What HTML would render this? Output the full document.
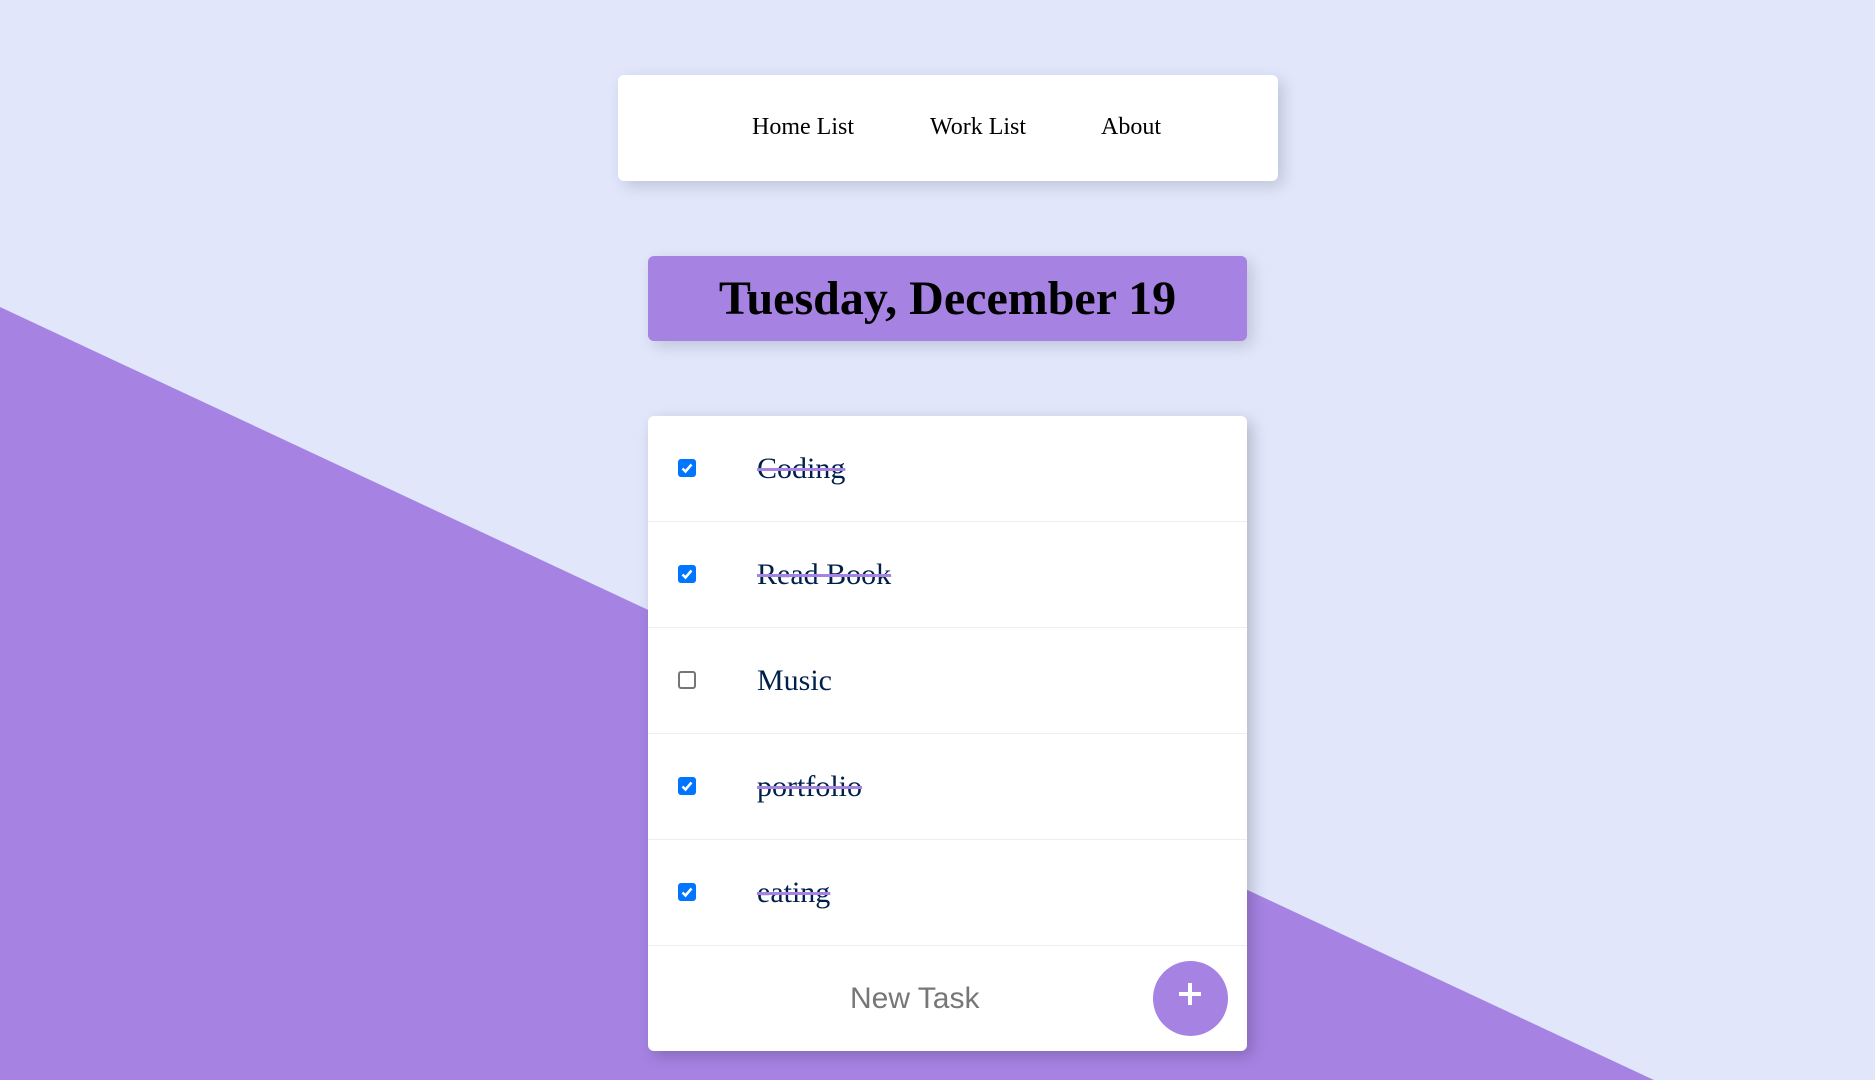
<!DOCTYPE html>
<html><head><meta charset="utf-8"><style>
*{margin:0;padding:0;box-sizing:border-box}
body{width:1875px;height:1080px;overflow:hidden;background:#e1e6fb;position:relative;font-family:"Liberation Serif",serif}
.bg{position:absolute;left:0;top:0}
.nav{position:absolute;left:618px;top:75px;width:660px;height:106px;background:#fff;border-radius:6px;box-shadow:5px 5px 15px rgba(0,0,0,.15)}
.nav span{position:absolute;top:37px;font-size:24px;color:#000;line-height:30px}
.date{position:absolute;left:648px;top:256px;width:599px;height:85px;background:#a683e3;border-radius:6px;box-shadow:5px 5px 15px rgba(0,0,0,.15);text-align:center;font-weight:bold;font-size:48px;line-height:85px;color:#000}
.card{position:absolute;left:648px;top:416px;width:599px;height:635px;background:#fff;border-radius:6px;box-shadow:5px 5px 15px rgba(0,0,0,.2)}
.row{position:absolute;left:0;width:599px;height:106px;border-bottom:1px solid #eee}
.cb{position:absolute;left:30px;top:43px;width:18px;height:18px;border-radius:3px}
.on{background:#0075ff}
.off{border:2px solid #767676;background:#fff}
.t{position:absolute;left:109px;top:33px;font-size:30px;line-height:40px;color:#00204a}
.s{text-decoration:line-through;text-decoration-color:#a683e3;text-decoration-thickness:3px;text-decoration-skip-ink:none}
.nt{position:absolute;left:0;top:529px;width:599px;height:106px}
.ph{position:absolute;left:202px;top:34px;font-family:"Liberation Sans",sans-serif;font-size:30px;color:#777;line-height:40px}
.btn{position:absolute;left:505px;top:545px;width:75px;height:75px;border-radius:50%;background:#a683e3}
.btn:before{content:"";position:absolute;left:26px;top:31px;width:22px;height:4px;background:#fff}
.btn:after{content:"";position:absolute;left:35px;top:22px;width:4px;height:22px;background:#fff}
</style></head><body>
<svg class="bg" width="1875" height="1080"><polygon points="0,307 1654,1080 0,1080" fill="#a683e3"/></svg>
<div class="nav"><span style="left:134px">Home List</span><span style="left:312px">Work List</span><span style="left:483px">About</span></div>
<div class="date">Tuesday, December 19</div>
<div class="card">
<div class="row" style="top:0"><div class="cb on"><svg width="18" height="18"><path d="M4.5 9.5l3 3 6-7" stroke="#fff" stroke-width="2.5" fill="none"/></svg></div><div class="t s">Coding</div></div>
<div class="row" style="top:106px"><div class="cb on"><svg width="18" height="18"><path d="M4.5 9.5l3 3 6-7" stroke="#fff" stroke-width="2.5" fill="none"/></svg></div><div class="t s">Read Book</div></div>
<div class="row" style="top:212px"><div class="cb off"></div><div class="t">Music</div></div>
<div class="row" style="top:318px"><div class="cb on"><svg width="18" height="18"><path d="M4.5 9.5l3 3 6-7" stroke="#fff" stroke-width="2.5" fill="none"/></svg></div><div class="t s">portfolio</div></div>
<div class="row" style="top:424px"><div class="cb on"><svg width="18" height="18"><path d="M4.5 9.5l3 3 6-7" stroke="#fff" stroke-width="2.5" fill="none"/></svg></div><div class="t s">eating</div></div>
<div class="nt"><div class="ph">New Task</div></div>
<div class="btn"></div>
</div>
</body></html>
